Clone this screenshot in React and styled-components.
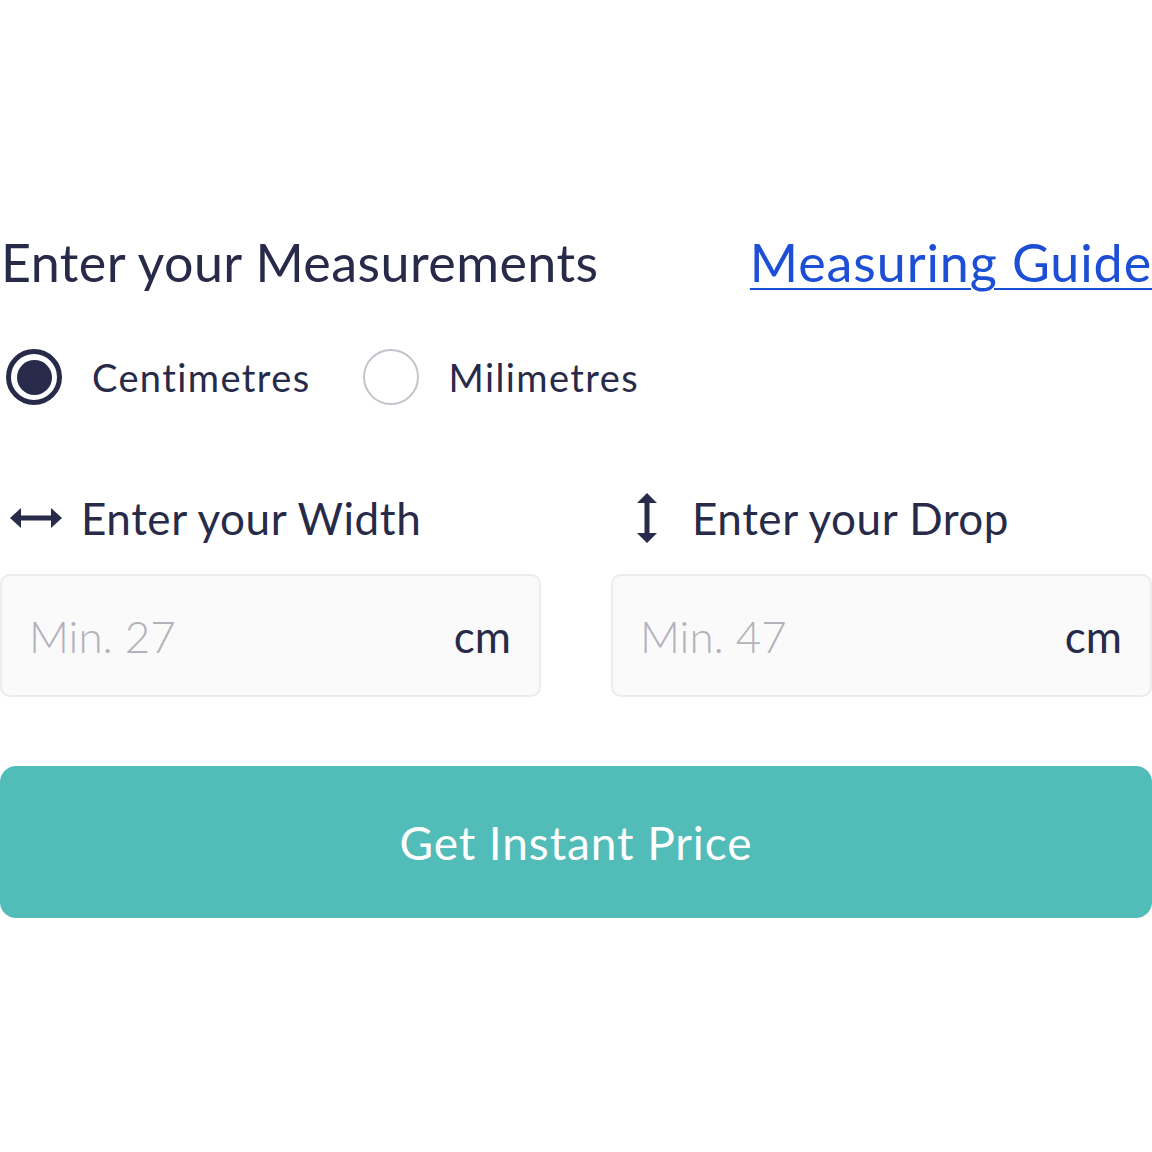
import React from "react";
import styled, { createGlobalStyle } from "styled-components";

const Global = createGlobalStyle`
  html, body { margin: 0; padding: 0; background: #ffffff; }
  body { font-family: Lato, "Noto Sans", sans-serif; color: #272b49; }
  * { box-sizing: border-box; }
`;

const Form = styled.div`
  width: 1152px;
  padding-top: 232px;
  display: flex;
  flex-direction: column;
`;

const HeaderRow = styled.div`
  display: flex;
  justify-content: space-between;
  align-items: baseline;
  height: 60px;
`;

const Title = styled.h2`
  margin: 0;
  font-weight: 400;
  font-size: 52px;
  line-height: 60px;
  letter-spacing: 0.45px;
  color: #272b49;
  padding-left: 1px;
`;

const GuideLink = styled.a`
  font-size: 52px;
  line-height: 60px;
  letter-spacing: 0.9px;
  color: #1d4fd6;
  text-decoration: underline;
  text-decoration-thickness: 2px;
  text-underline-offset: 6px;
  cursor: pointer;
`;

const RadioRow = styled.div`
  margin-top: 57px;
  display: flex;
  align-items: center;
  height: 56px;
  padding-left: 6px;
`;

const RadioOption = styled.label`
  display: flex;
  align-items: center;
  gap: 30px;
  margin-right: 52px;
  font-size: 38px;
  letter-spacing: 1.4px;
  line-height: 56px;
  color: #272b49;
  cursor: pointer;
`;

const RadioCircle = styled.span`
  width: 56px;
  height: 56px;
  flex: none;
  border-radius: 50%;
  display: flex;
  align-items: center;
  justify-content: center;
  border: ${(p) => (p.$checked ? "5px solid #272b49" : "2px solid #c3c3cb")};
  background: #fff;
  &::after {
    content: "";
    width: 35px;
    height: 35px;
    border-radius: 50%;
    background: ${(p) => (p.$checked ? "#272b49" : "transparent")};
  }
`;

const Fields = styled.div`
  margin-top: 88px;
  display: grid;
  grid-template-columns: 541px 541px;
  column-gap: 70px;
`;

const Field = styled.div`
  display: flex;
  flex-direction: column;
`;

const FieldLabel = styled.div`
  display: flex;
  align-items: center;
  height: 50px;
  font-size: 44px;
  letter-spacing: 0.55px;
  color: #272b49;
`;

const IconBox = styled.span`
  width: 71px;
  display: flex;
  justify-content: center;
  align-items: center;
  margin-right: 10px;
`;

const InputBox = styled.div`
  margin-top: 31px;
  height: 123px;
  border: 2px solid #ececef;
  border-radius: 10px;
  background: #fafafa;
  display: flex;
  align-items: center;
  justify-content: space-between;
  padding: 0 28px 0 27px;
`;

const Input = styled.input`
  border: none;
  background: transparent;
  outline: none;
  font-family: inherit;
  font-size: 44px;
  font-weight: 300;
  color: #272b49;
  width: 300px;
  padding: 0;
  &::placeholder { color: #b2b2ba; }
`;

const Unit = styled.span`
  font-size: 44px;
  color: #272b49;
`;

const PriceButton = styled.button`
  margin-top: 69px;
  height: 152px;
  width: 100%;
  border: none;
  border-radius: 16px;
  background: #52bcb8;
  color: #ffffff;
  font-family: inherit;
  font-size: 46px;
  letter-spacing: 0.9px;
  cursor: pointer;
`;

const HArrow = () => (
  <svg width="52" height="22" viewBox="0 0 52 22">
    <path d="M0 11 L11 1 L11 8.5 L41 8.5 L41 1 L52 11 L41 21 L41 13.5 L11 13.5 L11 21 Z" fill="#272b49" />
  </svg>
);

const VArrow = () => (
  <svg width="22" height="50" viewBox="0 0 22 50">
    <path d="M11 0 L21 10 L13.5 10 L13.5 40 L21 40 L11 50 L1 40 L8.5 40 L8.5 10 L1 10 Z" fill="#272b49" />
  </svg>
);

export default function App() {
  return (
    <>
      <Global />
      <Form>
        <HeaderRow>
          <Title>Enter your Measurements</Title>
          <GuideLink>Measuring Guide</GuideLink>
        </HeaderRow>
        <RadioRow>
          <RadioOption>
            <RadioCircle $checked />
            Centimetres
          </RadioOption>
          <RadioOption>
            <RadioCircle />
            Milimetres
          </RadioOption>
        </RadioRow>
        <Fields>
          <Field>
            <FieldLabel>
              <IconBox><HArrow /></IconBox>
              Enter your Width
            </FieldLabel>
            <InputBox>
              <Input placeholder="Min. 27" />
              <Unit>cm</Unit>
            </InputBox>
          </Field>
          <Field>
            <FieldLabel>
              <IconBox><VArrow /></IconBox>
              Enter your Drop
            </FieldLabel>
            <InputBox>
              <Input placeholder="Min. 47" />
              <Unit>cm</Unit>
            </InputBox>
          </Field>
        </Fields>
        <PriceButton>Get Instant Price</PriceButton>
      </Form>
    </>
  );
}
